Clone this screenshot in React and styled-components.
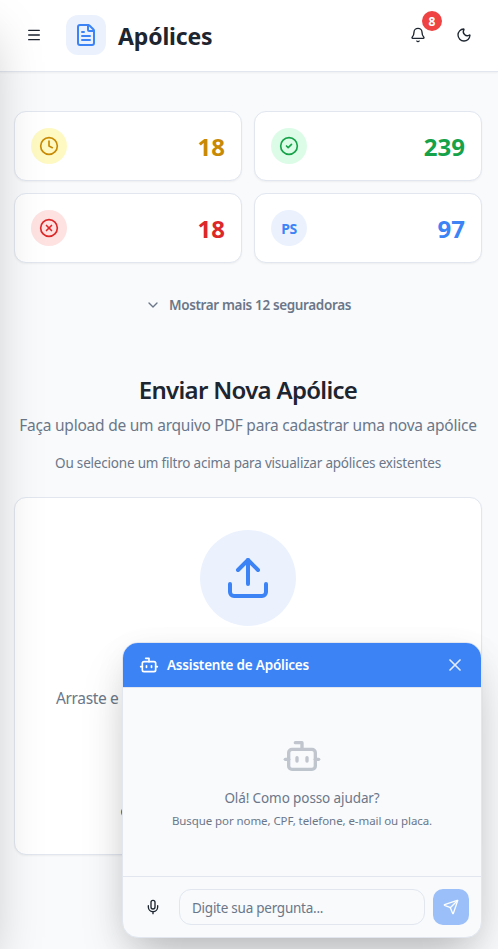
import React from 'react'
import styled, { createGlobalStyle } from 'styled-components'
import {
    Bell, Bot, ChevronDown, CircleCheck, CircleX, Clock, FileText, Menu, Mic, Moon, Send, Upload, X
} from 'lucide-react'

const colors = {
    bg: '#f8fafc',
    card: '#ffffff',
    border: '#e1e6ef',
    text: '#1d2530',
    muted: '#6b7789',
    primary: '#3c83f6',
    primarySoft: '#ebf2fe',
    danger: '#ef4343',
}

const GlobalStyle = createGlobalStyle`
    * { box-sizing: border-box; }
    html, body { margin: 0; height: 949px; overflow: hidden; }
    body {
        background: ${colors.bg};
        color: ${colors.text};
        font-family: 'Segoe UI', 'Noto Sans', 'Open Sans', sans-serif;
    }
    button, input { font: inherit; color: inherit; }
    h1, h2, p { margin: 0; }
    svg { display: block; flex: none; }
`

// Layout
const Page = styled.div`
    position: relative;
    height: 949px;
    overflow: hidden;
`

// Closed drawer, only its shadow reaches the page
const Sidebar = styled.aside`
    position: absolute;
    z-index: 30;
    top: 0;
    left: -256px;
    width: 256px;
    height: 949px;
    box-shadow: 0 25px 50px -12px rgba(0, 0, 0, 0.25);
    pointer-events: none;
`

const Header = styled.header`
    display: flex;
    align-items: center;
    height: 72px;
    padding: 0 16px 2px;
    background: ${colors.card};
    border-bottom: 1px solid ${colors.border};
    box-shadow: 0 1px 2px rgba(0, 0, 0, 0.05);
`

const IconButton = styled.button`
    position: relative;
    display: flex;
    align-items: center;
    justify-content: center;
    width: 36px;
    height: 36px;
    padding: 0;
    border: 0;
    background: none;
`

const HeaderIcon = styled.div`
    display: flex;
    align-items: center;
    justify-content: center;
    width: 40px;
    height: 40px;
    margin: 0 12px 0 14px;
    border-radius: 12px;
    background: ${colors.primarySoft};
    color: ${colors.primary};
`

const Title = styled.h1`
    flex: 1;
    padding-top: 2px;
    font-size: 23px;
    font-weight: 700;
    line-height: 32px;
    letter-spacing: -0.15px;
`

const Actions = styled.div`
    display: flex;
    gap: 10px;
`

const Badge = styled.span`
    position: absolute;
    top: -6px;
    right: -6px;
    width: 20px;
    height: 20px;
    border-radius: 50%;
    background: ${colors.danger};
    color: #fff;
    font-size: 12px;
    font-weight: 700;
    line-height: 21px;
    text-align: center;
`

const Main = styled.main`
    display: flex;
    flex-direction: column;
    padding: 39px 16px 0 14px;
`

// Stats
const Stats = styled.section`
    display: grid;
    grid-template-columns: 1fr 1fr;
    gap: 12px;
`

const StatCard = styled.div`
    display: flex;
    align-items: center;
    justify-content: space-between;
    padding: 16px;
    border: 1px solid ${colors.border};
    border-radius: 12px;
    background: ${colors.card};
    box-shadow: 0 1px 2px rgba(0, 0, 0, 0.05);
`

const StatIcon = styled.div`
    display: flex;
    align-items: center;
    justify-content: center;
    width: 36px;
    height: 36px;
    border-radius: 50%;
    background: ${p => p.$bg};
    color: ${p => p.$color};
    font-size: 14px;
    font-weight: 700;
    letter-spacing: -0.5px;
`

const StatValue = styled.span`
    padding-top: 2px;
    color: ${p => p.$color};
    font-size: 24px;
    font-weight: 700;
    line-height: 32px;
`

const MoreButton = styled.button`
    display: flex;
    align-items: center;
    align-self: center;
    gap: 8px;
    height: 36px;
    margin-top: 24px;
    padding: 0;
    border: 0;
    background: none;
    color: ${colors.muted};
    font-size: 13.5px;
    font-weight: 600;
    letter-spacing: -0.36px;
    white-space: nowrap;
`

// Upload
const Intro = styled.section`
    display: flex;
    flex-direction: column;
    align-items: center;
    margin-top: 51px;
    text-align: center;
    white-space: nowrap;
`

const IntroTitle = styled.h2`
    font-size: 24px;
    font-weight: 600;
    line-height: 32px;
    letter-spacing: -0.7px;
`

const IntroText = styled.p`
    margin-top: 7px;
    color: ${colors.muted};
    font-size: 15.5px;
    line-height: 24px;
    letter-spacing: -0.23px;
`

const IntroHint = styled.p`
    margin-top: 16px;
    color: ${colors.muted};
    font-size: 13.5px;
    line-height: 20px;
    letter-spacing: -0.2px;
`

const DropZone = styled.section`
    display: flex;
    flex-direction: column;
    align-items: center;
    height: 358px;
    margin-top: 24px;
    padding: 32px 0;
    border: 1px solid ${colors.border};
    border-radius: 12px;
    background: ${colors.card};
    box-shadow: 0 1px 2px rgba(0, 0, 0, 0.05);
    white-space: nowrap;
`

const UploadCircle = styled.div`
    display: flex;
    align-items: center;
    justify-content: center;
    width: 96px;
    height: 96px;
    border-radius: 50%;
    background: ${colors.primarySoft};
    color: ${colors.primary};
`

const DropText = styled.p`
    width: 384px;
    margin-top: 60px;
    color: ${colors.muted};
    font-size: 15.5px;
    line-height: 24px;
    letter-spacing: -0.35px;
`

const DropHint = styled.p`
    width: 255px;
    margin-top: 92px;
    font-size: 13.5px;
    font-weight: 500;
    line-height: 20px;
`

// Assistant
const Chat = styled.aside`
    position: absolute;
    z-index: 20;
    right: 16px;
    bottom: 11px;
    display: flex;
    flex-direction: column;
    width: 360px;
    height: 296px;
    border: 1px solid ${colors.border};
    border-radius: 16px;
    background: ${colors.bg};
    box-shadow: 0 25px 50px -12px rgba(0, 0, 0, 0.25), 0 8px 32px rgba(0, 0, 0, 0.06);
    overflow: hidden;
`

const ChatHeader = styled.div`
    display: flex;
    align-items: center;
    gap: 8px;
    height: 44px;
    padding: 0 16px;
    background: ${colors.primary};
    color: #fff;
`

const ChatTitle = styled.span`
    flex: 1;
    font-size: 13.5px;
    font-weight: 600;
    line-height: 20px;
    letter-spacing: -0.2px;
`

const CloseButton = styled.button`
    padding: 0;
    border: 0;
    background: none;
    opacity: 0.85;
`

const ChatBody = styled.div`
    display: flex;
    flex: 1;
    flex-direction: column;
    align-items: center;
    padding-top: 48px;
    border-top: 1px solid ${colors.border};
    color: ${colors.muted};
    white-space: nowrap;

    svg { opacity: 0.4; }
`

const Greeting = styled.p`
    margin-top: 12px;
    font-size: 13.5px;
    line-height: 20px;
    letter-spacing: -0.1px;
`

const ChatHint = styled.p`
    margin-top: 5px;
    font-size: 11.5px;
    line-height: 16px;
    letter-spacing: -0.08px;
`

const ChatForm = styled.form`
    display: flex;
    gap: 8px;
    padding: 12px;
    border-top: 1px solid ${colors.border};
`

const ChatInput = styled.input`
    flex: 1;
    min-width: 0;
    height: 36px;
    padding: 1px 12px 0;
    border: 1px solid ${colors.border};
    border-radius: 12px;
    background: ${colors.bg};
    font-size: 13.5px;
    letter-spacing: -0.25px;

    &::placeholder { color: ${colors.muted}; opacity: 1; }
`

const SendButton = styled(IconButton)`
    border-radius: 10px;
    background: ${colors.primary};
    color: #fff;
    opacity: 0.5;
`

const stats = [
    { id: 'pending', icon: <Clock size={20} />, value: 18, color: '#c88a04', bg: '#fef9c3' },
    { id: 'active', icon: <CircleCheck size={20} />, value: 239, color: '#16a249', bg: '#dcfce7' },
    { id: 'expired', icon: <CircleX size={20} />, value: 18, color: '#dc2828', bg: '#fee1e1' },
    { id: 'ps', icon: 'PS', value: 97, color: colors.primary, bg: colors.primarySoft },
]

const App = () => (
    <Page>
        <GlobalStyle />
        <Sidebar />
        <Header>
            <IconButton aria-label='Menu'><Menu size={16} /></IconButton>
            <HeaderIcon><FileText size={24} /></HeaderIcon>
            <Title>Apólices</Title>
            <Actions>
                <IconButton aria-label='Notificações'>
                    <Bell size={16} />
                    <Badge>8</Badge>
                </IconButton>
                <IconButton aria-label='Tema'><Moon size={16} /></IconButton>
            </Actions>
        </Header>

        <Main>
            <Stats>
                {stats.map(stat => (
                    <StatCard key={stat.id}>
                        <StatIcon $bg={stat.bg} $color={stat.color}>{stat.icon}</StatIcon>
                        <StatValue $color={stat.color}>{stat.value}</StatValue>
                    </StatCard>
                ))}
            </Stats>
            <MoreButton>
                <ChevronDown size={16} />
                Mostrar mais 12 seguradoras
            </MoreButton>

            <Intro>
                <IntroTitle>Enviar Nova Apólice</IntroTitle>
                <IntroText>Faça upload de um arquivo PDF para cadastrar uma nova apólice</IntroText>
                <IntroHint>Ou selecione um filtro acima para visualizar apólices existentes</IntroHint>
            </Intro>

            <DropZone>
                <UploadCircle><Upload size={48} /></UploadCircle>
                <DropText>Arraste e solte</DropText>
                <DropHint>Clique</DropHint>
            </DropZone>
        </Main>

        <Chat>
            <ChatHeader>
                <Bot size={20} />
                <ChatTitle>Assistente de Apólices</ChatTitle>
                <CloseButton aria-label='Fechar'><X size={20} /></CloseButton>
            </ChatHeader>
            <ChatBody>
                <Bot size={40} />
                <Greeting>Olá! Como posso ajudar?</Greeting>
                <ChatHint>Busque por nome, CPF, telefone, e-mail ou placa.</ChatHint>
            </ChatBody>
            <ChatForm>
                <IconButton type='button' aria-label='Gravar'><Mic size={16} /></IconButton>
                <ChatInput placeholder='Digite sua pergunta...' />
                <SendButton type='button' aria-label='Enviar'><Send size={16} /></SendButton>
            </ChatForm>
        </Chat>
    </Page>
)

export default App
